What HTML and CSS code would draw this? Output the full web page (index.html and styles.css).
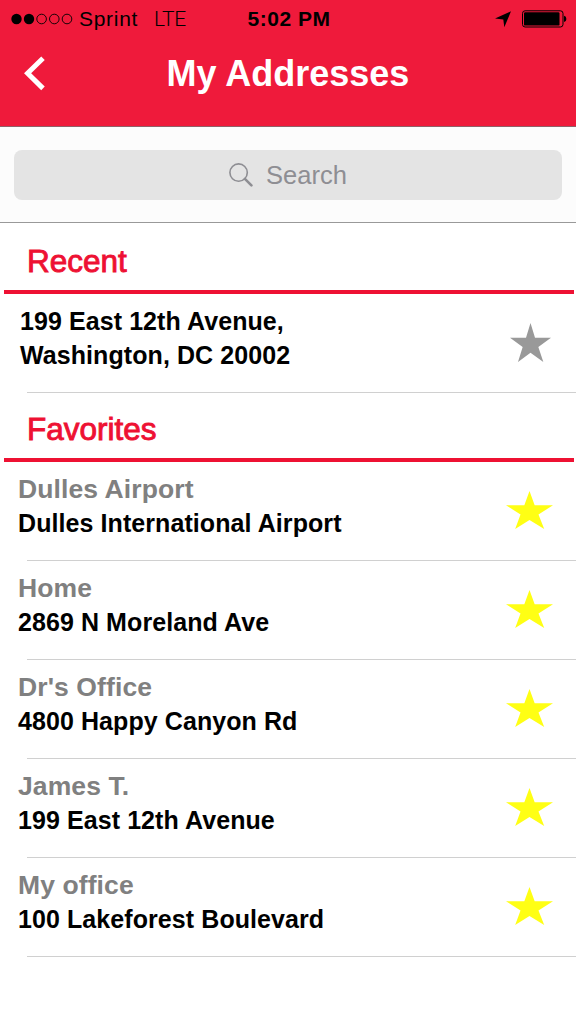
FILE: index.html
```html
<!DOCTYPE html>
<html lang="en">
<head>
    <meta charset="UTF-8">
    <meta name="viewport" content="width=device-width, initial-scale=1.0">
    <title>My Addresses</title>
    <link rel="stylesheet" href="styles.css">
</head>
<body>

    <svg class="sprite" width="0" height="0">
        <symbol id="star" viewBox="0 0 123 117" preserveAspectRatio="none">
            <polygon points="61.5,0 75,44 123,44 85,72 100,117 61.5,89 24,117 38,72 0,44 48,44"/>
        </symbol>
    </svg>

    <header class="header">
        <div class="status-bar">
            <div class="status-left">
                <svg class="signal" width="62" height="12" viewBox="0 0 62 12">
                    <circle cx="5.5" cy="6" r="5.2"/>
                    <circle cx="18" cy="6" r="5.2"/>
                    <g fill="none" stroke="#000" stroke-width="0.9">
                        <circle cx="30.6" cy="6" r="4.8"/>
                        <circle cx="43.3" cy="6" r="4.8"/>
                        <circle cx="56" cy="6" r="4.8"/>
                    </g>
                </svg>
                <span class="carrier">Sprint</span>
                <span class="network">LTE</span>
            </div>
            <span class="time">5:02 PM</span>
            <div class="status-right">
                <svg width="16" height="17" viewBox="0 0 16 17">
                    <path d="M16 0.3 L9.3 16.3 L8.3 8.6 L0 7.4 Z"/>
                </svg>
                <svg width="45" height="18" viewBox="0 0 45 18">
                    <rect x="0.5" y="0.8" width="40.5" height="16.2" rx="2.6" fill="none" stroke="#000"/>
                    <rect x="2" y="2.2" width="35.5" height="13.4" rx="1.2"/>
                    <path d="M42 5.8 Q44.4 6.2 44.4 8.9 Q44.4 11.6 42 12 Z"/>
                </svg>
            </div>
        </div>
        <div class="nav">
            <button type="button" class="back" aria-label="Back">
                <svg width="22" height="36" viewBox="0 0 22 36">
                    <path d="M19 2.2 L3.6 17.3 L19 32.4" fill="none" stroke="#fff" stroke-width="5"/>
                </svg>
            </button>
            <h1>My Addresses</h1>
        </div>
    </header>

    <div class="search-bar">
        <div class="search">
            <svg width="24" height="24" viewBox="0 0 24 24" fill="none" stroke="#8e8e93">
                <circle cx="9.6" cy="9.6" r="8.7" stroke-width="1.6"/>
                <path d="M15.9 15.9 L22.4 22.4" stroke-width="2.6" stroke-linecap="round"/>
            </svg>
            <span>Search</span>
        </div>
    </div>

    <section class="recent">
        <h2>Recent</h2>
        <ul>
            <li>
                <div class="address">
                    <p>199 East 12th Avenue,</p>
                    <p>Washington, DC 20002</p>
                </div>
                <svg class="star"><use href="#star"/></svg>
            </li>
        </ul>
    </section>

    <section class="favorites">
        <h2>Favorites</h2>
        <ul>
            <li>
                <div class="address">
                    <h3>Dulles Airport</h3>
                    <p>Dulles International Airport</p>
                </div>
                <svg class="star"><use href="#star"/></svg>
            </li>
            <li>
                <div class="address">
                    <h3>Home</h3>
                    <p>2869 N Moreland Ave</p>
                </div>
                <svg class="star"><use href="#star"/></svg>
            </li>
            <li>
                <div class="address">
                    <h3>Dr's Office</h3>
                    <p>4800 Happy Canyon Rd</p>
                </div>
                <svg class="star"><use href="#star"/></svg>
            </li>
            <li>
                <div class="address">
                    <h3>James T.</h3>
                    <p>199 East 12th Avenue</p>
                </div>
                <svg class="star"><use href="#star"/></svg>
            </li>
            <li>
                <div class="address">
                    <h3>My office</h3>
                    <p>100 Lakeforest Boulevard</p>
                </div>
                <svg class="star"><use href="#star"/></svg>
            </li>
        </ul>
    </section>

</body>
</html>
```
FILE: styles.css
```css
* {
    box-sizing: border-box;
}

body {
    margin: 0;
    font-family: "Liberation Sans", Arial, sans-serif;
    background-color: #fff;
    color: #000;
}

h1, h2, h3, p, ul {
    margin: 0;
    padding: 0;
}

svg {
    display: block;
}

.sprite {
    position: absolute;
}

/* header */
.header {
    height: 127px;
    background-color: #ef1a3b;
    border-bottom: 1px solid #8f6068;
}

.status-bar {
    display: grid;
    grid-template-columns: 1fr auto 1fr;
    height: 38px;
    padding: 0 9px 0 11px;
    line-height: 38px;
    font-size: 21px;
}

.status-left, .status-right {
    display: flex;
    align-items: center;
}

.status-right {
    justify-content: flex-end;
    gap: 11px;
}

.carrier {
    margin-left: 6px;
    letter-spacing: 0.7px;
}

.network {
    margin-left: 16px;
    font-family: Roboto, sans-serif;
    font-weight: 300;
    letter-spacing: -0.3px;
}

.time {
    font-weight: bold;
    letter-spacing: 0.5px;
}

.nav {
    display: grid;
    grid-template-columns: 60px 1fr 60px;
    align-items: center;
    height: 71px;
}

.back {
    margin-left: 24px;
    padding: 0;
    border: none;
    background: none;
}

h1 {
    font-size: 36px;
    line-height: 71px;
    text-align: center;
    color: #fff;
}

/* search */
.search-bar {
    height: 96px;
    padding: 23px 14px 0;
    background-color: #fcfcfc;
    border-bottom: 1px solid #999;
}

.search {
    display: flex;
    justify-content: center;
    align-items: center;
    gap: 13px;
    height: 50px;
    border-radius: 8px;
    background-color: #e4e4e4;
    color: #8e8e93;
    font-size: 25.5px;
}

/* lists */
h2 {
    margin: 0 2px 0 4px;
    padding-left: 23px;
    border-bottom: 4px solid #ee1133;
    font-size: 31.5px;
    font-weight: normal;
    line-height: 58px;
    color: #ee1133;
    -webkit-text-stroke: 0.9px #ee1133;
}

.recent h2 {
    padding-top: 9px;
}

.favorites h2 {
    padding-top: 7px;
}

ul {
    list-style: none;
}

li {
    display: flex;
    justify-content: space-between;
    height: 99px;
    margin-left: 27px;
    padding: 10px 23px 0 0;
    border-bottom: 1px solid #d0d0d0;
}

.recent li {
    padding-right: 25px;
}

.address {
    margin-left: -9px;
    font-weight: bold;
    line-height: 34px;
}

.recent .address {
    margin-left: -7px;
}

h3 {
    font-size: 26.5px;
    letter-spacing: 0.1px;
    color: #808080;
}

p {
    font-size: 25px;
    letter-spacing: 0.08px;
}

.star {
    width: 47px;
    height: 38px;
    margin-top: 19px;
    fill: #ffff14;
}

.recent .star {
    width: 41px;
    height: 39px;
    fill: #999;
}
```
